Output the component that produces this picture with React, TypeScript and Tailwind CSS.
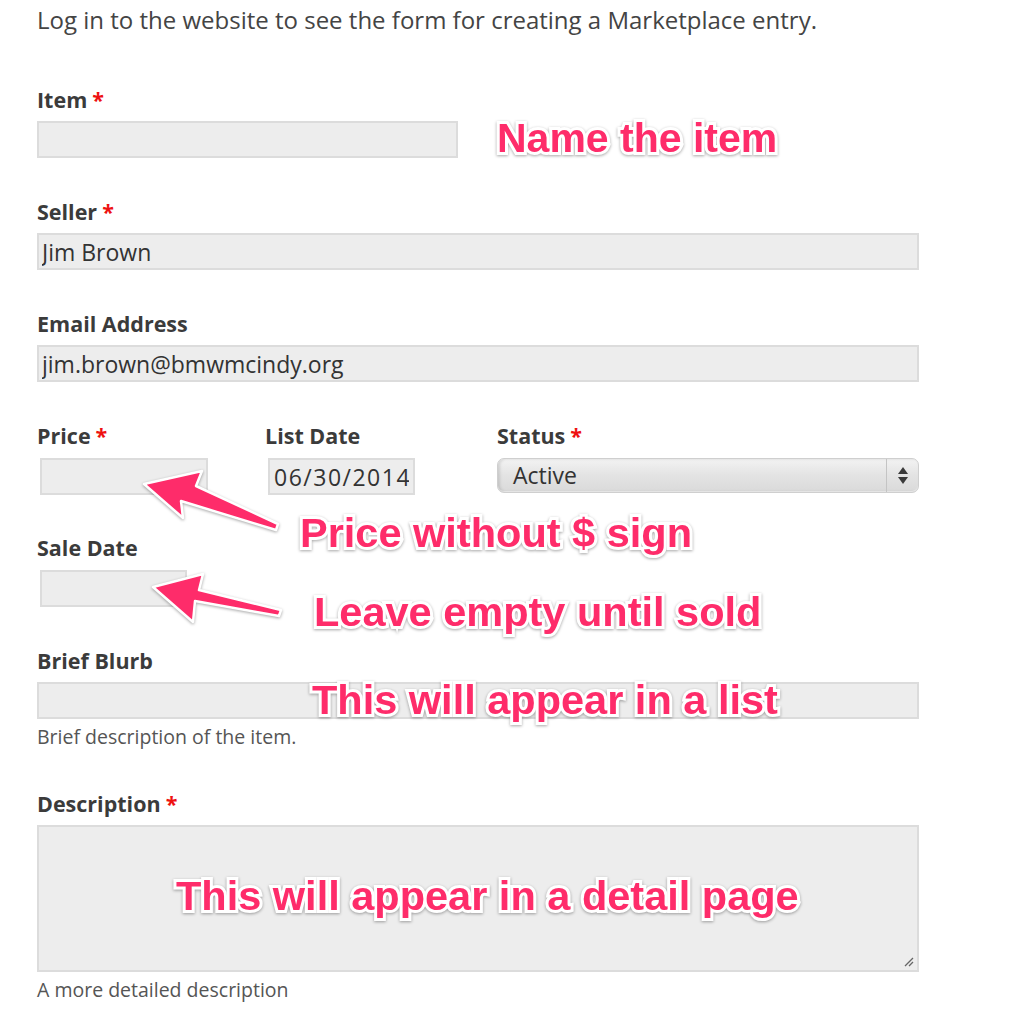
import React from "react";

const ann =
  "absolute whitespace-nowrap text-[41.5px] leading-[40px] font-bold text-[#fe2c6a] [font-family:'Liberation_Sans',Arial,sans-serif] [-webkit-text-stroke:6px_#ffffff] [paint-order:stroke_fill] [filter:drop-shadow(0_1px_1.5px_rgba(0,0,0,0.35))]";

function Label({ text, req }: { text: string; req?: boolean }) {
  return (
    <div className="text-[21.5px] leading-[24px] font-bold text-[#3b3b3b] whitespace-nowrap">
      {text}
      {req && <span className="text-[#ee1111] ml-[5px]">*</span>}
    </div>
  );
}

function Field({ value, className }: { value?: string; className: string }) {
  return (
    <input
      readOnly
      value={value ?? ""}
      className={
        "block h-[37px] border-2 border-[#dcdcdc] bg-[#ededed] px-[3px] text-[23px] text-[#333] outline-none " +
        className
      }
    />
  );
}

export default function App() {
  return (
    <div className="relative w-[1020px] h-[1024px] bg-white overflow-hidden [font-family:'Open_Sans',sans-serif] text-[#333]">
      <div className="pl-[37px] pt-[6px] w-[919px]">
        <p className="text-[24px] leading-[28px] text-[#444] whitespace-nowrap">
          Log in to the website to see the form for creating a Marketplace entry.
        </p>

        <div className="mt-[54px]">
          <Label text="Item" req />
          <Field className="mt-[9px] w-[421px]" />
        </div>

        <div className="mt-[42px]">
          <Label text="Seller" req />
          <Field className="mt-[9px] w-full" value="Jim Brown" />
        </div>

        <div className="mt-[42px]">
          <Label text="Email Address" />
          <Field className="mt-[9px] w-full" value="jim.brown@bmwmcindy.org" />
        </div>

        <div className="mt-[42px] flex">
          <div className="w-[228px]">
            <Label text="Price" req />
            <Field className="mt-[10px] ml-[3px] w-[168px]" />
          </div>
          <div className="w-[232px]">
            <Label text="List Date" />
            <Field className="mt-[10px] ml-[3px] w-[147px] px-[4px] tracking-[1.5px]" value="06/30/2014" />
          </div>
          <div className="flex-1">
            <Label text="Status" req />
            <div className="mt-[10px] h-[35px] flex items-stretch rounded-[7px] border border-[#cfcfcf] bg-gradient-to-b from-[#f3f3f3] via-[#e3e3e3] to-[#dadada] shadow-[inset_2px_0_3px_rgba(0,0,0,0.12),inset_0_-1px_0_rgba(255,255,255,0.6)]">
              <div className="flex-1 flex items-center pl-[15px] text-[23px] text-[#333]">Active</div>
              <div className="w-[32px] border-l border-[#c4c4c4] flex flex-col items-center justify-center gap-[3px]">
                <svg width="10" height="7" viewBox="0 0 10 7">
                  <path d="M5 0 L10 7 L0 7 Z" fill="#3a3a3a" />
                </svg>
                <svg width="10" height="7" viewBox="0 0 10 7">
                  <path d="M0 0 L10 0 L5 7 Z" fill="#3a3a3a" />
                </svg>
              </div>
            </div>
          </div>
        </div>

        <div className="mt-[41px]">
          <Label text="Sale Date" />
          <Field className="mt-[10px] ml-[3px] w-[147px]" />
        </div>

        <div className="mt-[42px]">
          <Label text="Brief Blurb" />
          <Field className="mt-[9px] w-full" />
          <div className="mt-[8px] text-[19.5px] leading-[20px] text-[#555] whitespace-nowrap">Brief description of the item.</div>
        </div>

        <div className="mt-[45px]">
          <Label text="Description" req />
          <div className="relative mt-[9px] h-[147px] w-full border-2 border-[#dcdcdc] bg-[#ededed]">
            <svg className="absolute right-[3px] bottom-[3px]" width="11" height="11" viewBox="0 0 11 11">
              <path d="M2 10 L10 2 M6 10 L10 6" stroke="#666" strokeWidth="1.3" />
            </svg>
          </div>
          <div className="mt-[8px] text-[19.5px] leading-[20px] text-[#555] whitespace-nowrap">A more detailed description</div>
        </div>
      </div>

      <svg className="absolute left-0 top-0 pointer-events-none" width="1020" height="1024" viewBox="0 0 1020 1024">
        <g fill="#fe2c6a" stroke="#ffffff" strokeWidth="2.5" strokeLinejoin="round" style={{ filter: "drop-shadow(0 1px 1.5px rgba(0,0,0,0.35))" }}>
          <path d="M144 484 L202 471 L196 486 L278 524 L276 530 L181 501 L183 518 Z" />
          <path d="M153 587 L203 574 L199 590 L281 610 L279 616 L195 601 L193 622 Z" />
        </g>
      </svg>

      <div className={ann + " left-[497px] top-[118px] text-[41px]"}>Name the item</div>
      <div className={ann + " left-[300px] top-[513px]"}>Price without $ sign</div>
      <div className={ann + " left-[314px] top-[592px]"}>Leave empty until sold</div>
      <div className={ann + " left-[312px] top-[680px]"}>This will appear in a list</div>
      <div className={ann + " left-[176px] top-[876px]"}>This will appear in a detail page</div>
    </div>
  );
}
